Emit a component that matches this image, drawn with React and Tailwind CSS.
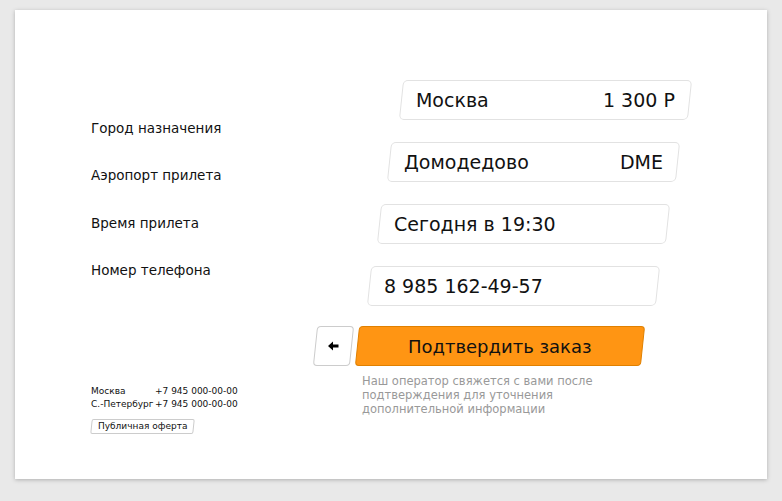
export default function App() {
  const F = ({ l, r, ml }) => (
    <div className={`h-[40px] w-[289px] -skew-x-[6deg] border border-[#e2e2e2] rounded-[5px] bg-white flex items-center justify-between px-[14px] ${ml}`}>
      <div className="skew-x-[6deg] text-[19px] text-[#111]">{l}</div>
      {r && <div className="skew-x-[6deg] text-[19px] text-[#111]">{r}</div>}
    </div>
  );
  return (
    <div className="w-[782px] h-[501px] bg-[#e9e9e9] pt-[10px] pl-[15px]" style={{ fontFamily: '"DejaVu Sans", Verdana, sans-serif' }}>
      <div className="w-[752px] h-[469px] bg-white shadow-[0_1px_4px_rgba(0,0,0,0.25)] flex">
        <div className="w-[300px] pl-[76px] flex flex-col">
          <div className="mt-[108px] flex flex-col gap-[27px] text-[13.5px] text-[#111]">
            <div>Город назначения</div>
            <div>Аэропорт прилета</div>
            <div>Время прилета</div>
            <div>Номер телефона</div>
          </div>
          <div className="mt-[105px] text-[9px] text-[#111] leading-[13px]">
            <div className="flex"><span className="w-[64px]">Москва</span><span>+7 945 000-00-00</span></div>
            <div className="flex"><span className="w-[64px]">С.-Петербург</span><span>+7 945 000-00-00</span></div>
          </div>
          <div className="mt-[8px] self-start -skew-x-[6deg] border border-[#ccc] rounded-[2px] px-[6px] h-[15px] flex items-center text-[9px] text-[#111]">
            <span className="skew-x-[6deg]">Публичная оферта</span>
          </div>
        </div>
        <div className="flex flex-col pt-[70px] gap-[22px]">
          <F l="Москва" r="1 300 Р" ml="ml-[86px]" />
          <F l="Домодедово" r="DME" ml="ml-[74px]" />
          <F l="Сегодня в 19:30" ml="ml-[64px]" />
          <F l="8 985 162-49-57" ml="ml-[54px]" />
          <div className="flex flex-col -mt-[2px]">
            <div className="flex gap-[5px]">
              <div className="h-[40px] w-[37px] -skew-x-[6deg] border border-[#ccc] rounded-[4px] flex items-center justify-center">
                <svg width="11" height="10" viewBox="0 0 11 10" className="skew-x-[6deg]"><path d="M0 5 L5 0.5 V3.5 H10.5 V6.5 H5 V9.5 Z" fill="#000" /></svg>
              </div>
              <div className="h-[40px] w-[286px] -skew-x-[6deg] bg-[#ff9513] border border-[#e08000] rounded-[4px] flex items-center justify-center">
                <span className="skew-x-[6deg] text-[18px] text-[#111]">Подтвердить заказ</span>
              </div>
            </div>
            <div className="ml-[47px] mt-[8px] text-[11.5px] leading-[14px] text-[#999] w-[280px]">Наш оператор свяжется с вами после подтверждения для уточнения дополнительной информации</div>
          </div>
        </div>
      </div>
    </div>
  );
}
